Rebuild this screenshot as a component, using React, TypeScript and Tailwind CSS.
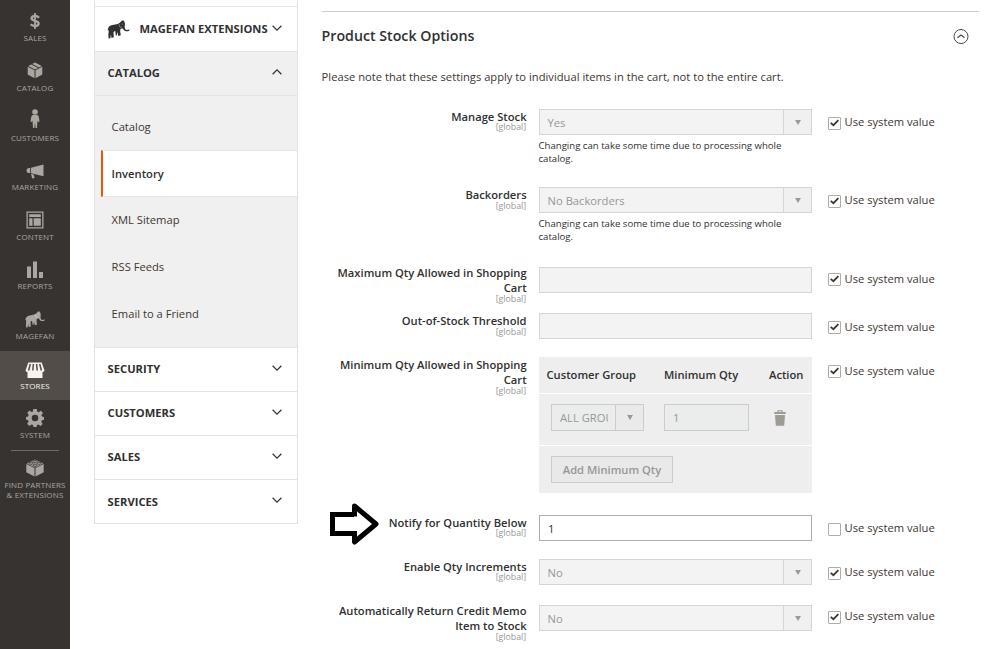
import React from 'react';

const sidebarIcon = 'fill-current';

function Elephant({ className }: { className: string }) {
  return (
    <svg viewBox="0 0 22 19" className={className} fill="currentColor">
      <path d="M.3 9.500C.6 6.600 2.600 5.300 5 4.900L10.300 3.900 12.600 2.500 14 .900 15.600.200 16.800 1.600C17.500 3 17.600 4.600 17.200 6.200 17 8.200 17.600 9.600 19 10L22 9.600 21.700 10.700C19.700 11.700 17 11.600 15.800 9.200L14.600 8.200 12.900 9 12.700 11.500 13.300 15.200 10.800 15.900 9.900 12 9.200 15.400 8.300 15.600 7.700 10.800 6 12 6.300 17.200 4 18 3.400 14.300 2.900 18.300 1.300 18.500C.700 16.500.800 14 1.200 12L1 9.500.400 11Z" />
      <path d="M11.700 4.200C11.400 6.400 12.600 7.700 14.200 7M14.900 3.700v1" fill="none" stroke="white" strokeOpacity=".6" strokeWidth=".7" />
    </svg>
  );
}

const nav: { label: string; icon: React.ReactNode; active?: boolean }[] = [
  {
    label: 'SALES',
    icon: (
      <svg viewBox="0 0 12 16" className="h-4 w-3" fill="none" stroke="currentColor" strokeWidth="2.4">
        <path d="M10 4.700C9 3.500 7.600 3 6 3 4 3 2.600 3.800 2.600 5.300 2.600 8.700 9.600 6.900 9.600 10.500 9.600 12 8 13 6 13 4.300 13 2.800 12.500 1.700 11.300" />
        <path d="M6 0v16" strokeWidth="1.800" />
      </svg>
    ),
  },
  {
    label: 'CATALOG',
    icon: (
      <svg viewBox="0 0 16 17" className={`h-[17px] w-4 ${sidebarIcon}`}>
        <path d="M.7 4.800 7.500 8.200V16.300L.7 12.600ZM15.300 4.800 8.500 8.200V16.300L15.300 12.600ZM4.200 2.500 11 6 8 7.400 1.200 4ZM8 .600 14.800 4 12 5.400 5.200 2Z" />
      </svg>
    ),
  },
  {
    label: 'CUSTOMERS',
    icon: (
      <svg viewBox="0 0 10 20" className={`mb-0.5 h-5 w-2.5 ${sidebarIcon}`}>
        <circle cx="5" cy="3" r="2.800" />
        <path d="M2.500 6H7.500Q8.600 6.500 9 9L9.500 12.500 8.200 13 7.500 11.500 7 19H5.600L5 14 4.400 19H3L2.500 11.500 1.800 13 .5 12.500 1 9Q1.400 6.500 2.500 6Z" />
      </svg>
    ),
  },
  {
    label: 'MARKETING',
    icon: (
      <svg viewBox="0 0 18 15" className={`mt-1 h-[15px] w-[18px] ${sidebarIcon}`}>
        <path d="M17.500.5V12.200L5 9.300V3.800ZM4.200 4V9H3C1.500 9 .500 7.800.5 6.400S1.600 4 3 4ZM5 10 7.700 10.600 8.600 14 6.200 14.500Z" />
      </svg>
    ),
  },
  {
    label: 'CONTENT',
    icon: (
      <svg viewBox="0 0 18 18" className={`h-[18px] w-[18px] ${sidebarIcon}`}>
        <path fillRule="evenodd" d="M.5.5H17.500V17.500H.5ZM1.800 1.800V16.200H16.200V1.800ZM3.200 3.200H14.800V6H3.200ZM3.200 7.200H6.500V14.800H3.200ZM7.700 7.200H14.800V14.800H7.700Z" />
      </svg>
    ),
  },
  {
    label: 'REPORTS',
    icon: (
      <svg viewBox="0 0 16 17" className={`h-[17px] w-4 ${sidebarIcon}`}>
        <path d="M0 5.500H4V17H0ZM6 .500H10V17H6ZM12 11H16V17H12Z" />
      </svg>
    ),
  },
  { label: 'MAGEFAN', icon: <Elephant className="mt-px h-[17px] w-5" /> },
  {
    label: 'STORES',
    active: true,
    icon: (
      <svg viewBox="0 0 20 17" className={`mt-1 h-[17px] w-5 ${sidebarIcon}`}>
        <path d="M3.300.5H16.700L19.500 8.500Q18.800 10 17.500 10V16H2.500V10Q1 10 .5 8.500Z" />
        <path d="M5.300 2 3.600 8.500M8.400 2 7.800 8.500M11.600 2 12.200 8.500M14.700 2 16.400 8.500" stroke="#524d49" strokeWidth="1.500" />
      </svg>
    ),
  },
  {
    label: 'SYSTEM',
    icon: (
      <svg viewBox="0 0 20 20" className={`h-5 w-5 ${sidebarIcon}`}>
        <path fillRule="evenodd" d="M8.300 1H11.700L12.200 3.600 13.700 4.200 15.900 2.700 18 5 16.400 7.200 17 8.500 19 9V11.700L17 12.200 16.300 13.700 17.700 15.900 15.500 18 13.400 16.500 12 17.100 11.500 19H8.500L8 17.100 6.500 16.500 4.300 18 2.200 15.800 3.600 13.600 3 12.200 1 11.600V8.900L3 8.400 3.700 6.900 2.300 4.700 4.600 2.600 6.500 4 7.900 3.400ZM10 6.700A3.300 3.300 0 1 0 10 13.300 3.300 3.300 0 1 0 10 6.700Z" />
      </svg>
    ),
  },
];

function Chevron({ up = false }: { up?: boolean }) {
  return (
    <svg viewBox="0 0 10 6" className="mb-[3px] h-1.5 w-2.5 shrink-0" fill="none" stroke="#41362f" strokeWidth="1.300">
      <path d={up ? 'M.600 5.200 5 .900 9.400 5.200' : 'M.600.800 5 5.100 9.400.800'} />
    </svg>
  );
}

function Sidebar() {
  return (
    <nav className="flex h-full w-[70px] shrink-0 flex-col bg-[#373330] pt-[3.6px] text-[8px] leading-[10px] tracking-[0.15px] text-[#aaa6a0]">
      {nav.map((n) => (
        <div
          key={n.label}
          className={`flex h-[49.6px] shrink-0 flex-col items-center ${n.active ? 'bg-[#524d49] text-[#f7f3eb]' : ''}`}
        >
          <div className="flex h-[29.75px] items-center justify-center pt-[5.4px]">{n.icon}</div>
          <div>{n.label}</div>
        </div>
      ))}
      <div className="mx-[11px] h-px shrink-0 bg-[#736963]" />
      <div className="flex flex-col items-center pt-[8px] text-center">
        <svg viewBox="0 0 18 18" className="h-[18px] w-[18px]" fill="currentColor">
          <path d="M.3 5 8.500 9V17.500L.3 13.200ZM17.700 5 9.500 9V17.500L17.700 13.200ZM9 .5 17.200 4.400 9 8.400.8 4.400Z" />
          <g fill="#aaa6a0" stroke="#373330" strokeWidth=".8">
            <ellipse cx="9" cy="2.400" rx="2" ry="1.100" />
            <ellipse cx="5" cy="4.200" rx="2" ry="1.100" />
            <ellipse cx="13" cy="4.200" rx="2" ry="1.100" />
            <ellipse cx="9" cy="6.200" rx="2" ry="1.100" />
          </g>
        </svg>
        <div className="mt-[3.2px] whitespace-nowrap">FIND PARTNERS<br />&amp; EXTENSIONS</div>
      </div>
    </nav>
  );
}

function ConfigNav() {
  return (
    <aside className="ml-6 h-[524px] w-[204px] shrink-0 border-x border-b border-[#e3e3e3] text-[11.2px] text-[#303030]">
      <div className="h-1.5" />
      <div className="flex h-[45px] items-center border-t border-[#e3e3e3] pr-[15px] pl-3 font-bold">
        <Elephant className="h-[19px] w-[23px] text-[#303030]" />
        <span className="ml-[9.500px] grow whitespace-nowrap">MAGEFAN EXTENSIONS</span>
        <Chevron />
      </div>
      <div className="flex h-11 items-center justify-between border-t border-[#e3e3e3] bg-[#f0f0f0] pr-[15px] pl-[12.6px] font-bold">
        CATALOG
        <Chevron up />
      </div>
      <div className="flex h-[252px] flex-col border-t border-[#e3e3e3] bg-[#f0f0f0] pt-[7px] text-[#41362f]">
        <div className="flex h-[47px] items-center pt-[2px] pl-[16.6px]">Catalog</div>
        <div className="ml-1.5 flex h-[47px] items-center border-y border-l-2 border-y-[#e3e3e3] border-l-[#eb5202] bg-white pt-[2px] pl-[8.6px] font-semibold text-[#303030]">
          Inventory
        </div>
        <div className="flex h-[46px] items-center pl-[16.6px]">XML Sitemap</div>
        <div className="flex h-[47px] items-center pt-[2px] pl-[16.6px]">RSS Feeds</div>
        <div className="flex h-[47px] items-center pt-[2px] pl-[16.6px]">Email to a Friend</div>
      </div>
      {['SECURITY', 'CUSTOMERS', 'SALES', 'SERVICES'].map((s) => (
        <div key={s} className="flex h-11 items-center justify-between border-t border-[#e3e3e3] pr-[15px] pl-[12.6px] font-bold">
          <span className={s === 'SERVICES' ? 'pt-[2px]' : ''}>{s}</span>
          <Chevron />
        </div>
      ))}
    </aside>
  );
}

function Triangle() {
  return (
    <svg viewBox="0 0 6 5" className="h-[5px] w-1.5" fill="#9c9893">
      <path d="M0 0H6L3 5Z" />
    </svg>
  );
}

function Select({ value }: { value: string }) {
  return (
    <div className="flex h-[26px] border border-[#d6d6d6] bg-[#f3f3f3] text-[#979797]">
      <div className="flex grow items-center pt-0.5 pl-[7.6px]">{value}</div>
      <div className="flex w-7 items-center justify-center border-l border-[#d6d6d6] bg-[#f0f0f0] pt-px pl-px">
        <Triangle />
      </div>
    </div>
  );
}

function Note() {
  return (
    <p className="mt-[4px] -ml-[0.5px] text-[9.6px] leading-[13px] text-[#303030]">
      Changing can take some time due to processing whole catalog.
    </p>
  );
}

function QtyTable() {
  return (
    <div className="h-[136px] text-[#979797]">
      <div className="flex h-9 items-center bg-[#eeeeee] pl-[7.500px] font-semibold text-[#303030]">
        <span className="w-[117.500px]">Customer Group</span>
        <span className="w-[105px]">Minimum Qty</span>
        <span>Action</span>
      </div>
      <div className="mt-px flex h-[51px] bg-[#eeeeee] pt-2.5 pl-3">
        <div className="flex h-[27px] w-[93px] border border-[#cccccc] bg-[#ebedec]">
          <div className="flex grow items-center pt-0.5 pl-2">
            <span className="w-12 overflow-hidden whitespace-nowrap">ALL GROUPS</span>
          </div>
          <div className="flex w-7 shrink-0 items-center justify-center border-l border-[#cccccc] bg-[#eaeaea] pl-px">
            <Triangle />
          </div>
        </div>
        <div className="ml-5 flex h-[27px] w-[85px] items-center border border-[#cccccc] bg-[#ebedec] pt-0.5 pl-2">1</div>
        <svg viewBox="0 0 12 16" className="mt-1.5 ml-[25px] h-4 w-3" fill="#9e9a94">
          <path d="M.300 2H3.300V.8Q3.300.2 4 .2H8Q8.700.2 8.700.8V2H11.700V4H.300ZM4.500 1.200V2H7.500V1.200ZM1 5H11L10.200 15.800H1.800Z" />
        </svg>
      </div>
      <div className="mt-px h-[47px] bg-[#eeeeee] pt-2.5 pl-3">
        <div className="flex h-[27px] w-[122px] items-center justify-center border border-[#cccccc] bg-[#e9e9e9] pt-0.5 font-semibold">
          Add Minimum Qty
        </div>
      </div>
    </div>
  );
}

const empty = <div className="h-[26px] border border-[#d6d6d6] bg-[#f3f3f3]" />;

const rows = [
  { label: 'Manage Stock', h: 'h-[78px]', sp: '-mt-[3px]', fp: '', cp: 'pt-[5px]', bp: 'mt-[3px]', on: true, field: <><Select value="Yes" /><Note /></> },
  { label: 'Backorders', h: 'h-[78px]', sp: '-mt-[2px]', fp: '', cp: 'pt-[5px]', bp: 'mt-[3px]', on: true, field: <><Select value="No Backorders" /><Note /></> },
  { label: 'Maximum Qty Allowed in Shopping Cart', h: 'h-12', sp: '-mt-[2px]', fp: 'pt-0.5', cp: 'pt-1.5', bp: 'mt-[2px]', on: true, field: empty },
  { label: 'Out-of-Stock Threshold', h: 'h-11', sp: '-mt-[2px]', fp: '', cp: 'pt-1.5', bp: 'mt-[2px]', on: true, field: empty },
  { label: 'Minimum Qty Allowed in Shopping Cart', h: 'h-[158px]', sp: '-mt-[2px]', fp: '', cp: 'pt-1.5', bp: 'mt-[2px]', on: true, field: <QtyTable /> },
  {
    label: 'Notify for Quantity Below', h: 'h-11', sp: '-mt-[3px]', fp: '', cp: 'pt-[5px]', bp: 'mt-[3px]', on: false,
    field: <div className="flex h-[26px] items-center border border-[#adadad] bg-white pt-0.5 pl-2 text-[#303030]">1</div>,
  },
  { label: 'Enable Qty Increments', h: 'h-11', sp: '-mt-[3px]', fp: '', cp: 'pt-[5px]', bp: 'mt-[3px]', on: true, field: <Select value="No" /> },
  { label: 'Automatically Return Credit Memo Item to Stock', h: 'h-[46px]', sp: '-mt-[2px]', fp: 'pt-0.5', cp: 'pt-[5px]', bp: 'mt-[3px]', on: true, field: <Select value="No" /> },
];

function SystemValue({ on, boxOffset }: { on: boolean; boxOffset: string }) {
  return (
    <div className="flex items-start text-[#41362f]">
      <div className={`flex h-[13px] w-[13px] items-center justify-center rounded-[1px] border border-[#adadad] bg-white ${boxOffset}`}>
        {on && (
          <svg viewBox="0 0 9 8" className="mb-0.5 h-2 w-[9px]" fill="none" stroke="#41362f" strokeWidth="1.800">
            <path d="M.700 3.800 3.400 6.200 8.400 1.200" />
          </svg>
        )}
      </div>
      <span className="ml-[3.500px] leading-4">Use system value</span>
    </div>
  );
}

export default function App() {
  return (
    <div className="relative flex h-[649px] w-[1000px] overflow-hidden bg-white font-['Open_Sans',sans-serif] text-[11.2px]">
      <Sidebar />
      <ConfigNav />
      <main className="ml-[23.6px] w-[657px] pt-[11px] text-[#303030]">
        <div className="flex h-[50px] items-center justify-between border-t border-[#cccccc] pr-2.5">
          <h2 className="pb-[2px] text-[14.2px] font-semibold">Product Stock Options</h2>
          <svg viewBox="0 0 16 16" className="h-4 w-4" fill="none" stroke="#514943">
            <circle cx="8" cy="7.500" r="7" />
            <path d="M4.500 8.700 8 6.100 11.500 8.700" strokeWidth="1.200" />
          </svg>
        </div>
        <p className="h-12 pt-2 leading-4 text-[#41362f]">
          Please note that these settings apply to individual items in the cart, not to the entire cart.
        </p>
        {rows.map((r) => (
          <div key={r.label} className={`grid grid-cols-[205px_273px_1fr] ${r.h}`}>
            <div className="text-right leading-[15px] font-semibold">
              {r.label}
              <div className={`pr-[0.4px] text-[8.800px] leading-3 font-normal text-[#979797] ${r.sp}`}>[global]</div>
            </div>
            <div className={`ml-[12.4px] -mr-[12.4px] ${r.fp}`}>{r.field}</div>
            <div className={`ml-[28.4px] ${r.cp}`}>
              <SystemValue on={r.on} boxOffset={r.bp} />
            </div>
          </div>
        ))}
      </main>
      <svg viewBox="0 0 50 44" className="absolute top-[502px] left-[330px] h-11 w-[50px]" fill="none" stroke="#000" strokeWidth="5" strokeLinejoin="round">
        <path strokeLinejoin="miter" d="M24 12.500H2.500V31.500H24" />
        <path d="M24.500 12.500V4L46 22 24.500 40V31.500" />
        <path d="M24.500 10V14.500M24.500 29V34" />
      </svg>
    </div>
  );
}
